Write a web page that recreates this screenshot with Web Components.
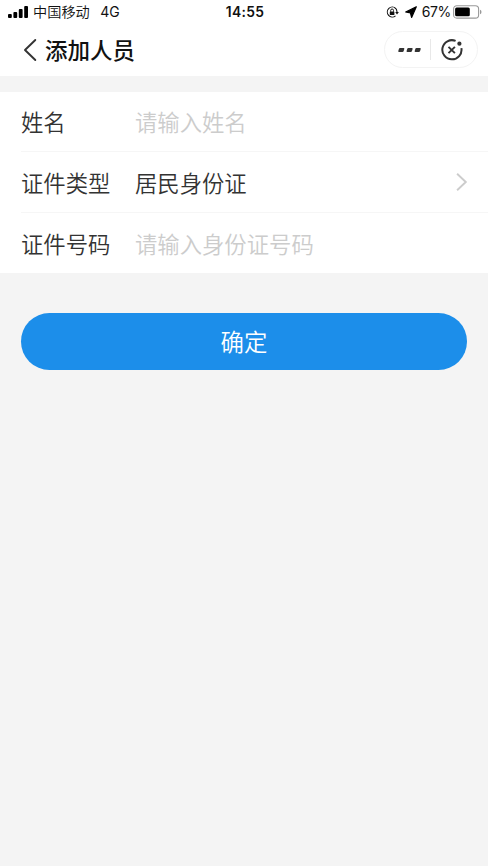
<!DOCTYPE html>
<html lang="zh-CN">
<head>
<meta charset="utf-8">
<title>添加人员</title>
<style>
html, body { margin: 0; height: 100%; background: #f4f4f4; }
body { font-family: "Inter", "Noto Sans CJK SC", sans-serif; color: #333; overflow: hidden; }
</style>
</head>
<body>
<person-page></person-page>
<script>
function define(name, html) {
  const t = document.createElement('template');
  t.innerHTML = html;
  customElements.define(name, class extends HTMLElement {
    constructor() {
      super();
      this.attachShadow({ mode: 'open' }).append(t.content.cloneNode(true));
    }
  });
}

define('status-bar', `
<style>
:host { display: grid; grid-template-columns: 1fr auto 1fr; align-items: center; height: 24px; box-sizing: border-box; padding: 0 6px 0 8px; background: #fff; color: #111; font-size: 14px; line-height: 24px; white-space: nowrap; }
.left, .right { display: flex; align-items: center; height: 24px; }
.right { justify-content: flex-end; }
.carrier { font: 350 14.2px/22px "Noto Sans CJK SC", sans-serif; height: 24px; margin-left: 5px; }
.net { margin-left: 10.5px; }
.time { font-weight: 600; font-size: 13.8px; letter-spacing: .35px; }
svg { display: block; flex: none; }
.lock { margin-right: 6px; }
.arrow { margin-right: 5px; }
.pct { letter-spacing: -.35px; margin-right: 2px; }
.arrow, .lock, .battery { margin-top: -1px; }
.signal { margin-top: -1px; }
</style>
<div class="left">
  <svg class="signal" width="20" height="12" viewBox="0 0 20 12"><g fill="#000"><rect y="8" width="3.8" height="4" rx="1"/><rect x="5.4" y="6" width="3.8" height="6" rx="1"/><rect x="10.8" y="3" width="3.8" height="9" rx="1"/><rect x="16.2" y="0" width="3.8" height="12" rx="1"/></g></svg>
  <span class="carrier">中国移动</span><span class="net">4G</span>
</div>
<span class="time">14:55</span>
<div class="right">
  <svg class="lock" width="13" height="12" viewBox="0 0 13 12"><path d="M9.8 2.4A5 5 0 1 0 9.5 9.9M8.5 1.5A5 5 0 0 1 11 6" fill="none" stroke="#111" stroke-width="1.1"/><path d="M9.2 6h3.7L11 8.4z" fill="#111"/><rect x="3.8" y="5.4" width="4.6" height="3.5" rx=".5" fill="#111"/><path d="M4.7 5.7V4.4a1.4 1.4 0 0 1 2.8 0v1.3" fill="none" stroke="#111"/></svg>
  <svg class="arrow" width="12" height="12" viewBox="0 0 12 12"><path d="M11.3.8.7 6 5.4 6.8 6.6 11.4z" fill="#000" stroke="#000" stroke-width="1.2" stroke-linejoin="round"/></svg>
  <span class="pct">67%</span>
  <svg class="battery" width="29" height="14" viewBox="0 0 29 14"><rect x=".6" y=".7" width="25" height="12.4" rx="3.2" fill="none" stroke="#999" stroke-width="1.1"/><rect x="2.1" y="2.6" width="14.7" height="8.7" rx="1.5" fill="#000"/><path d="M27 4.8q1.5.5 1.5 2.2T27 9.2z" fill="#999"/></svg>
</div>`);

define('capsule-menu', `
<style>
:host { display: flex; align-items: center; box-sizing: border-box; width: 94px; height: 37px; border: 1px solid #f3f3f3; border-radius: 19px; background: #fff; }
.half { flex: 1; display: flex; justify-content: center; }
.sep { width: 1px; height: 21px; background: #e8e8e8; }
svg { display: block; }
.more { padding-left: 4px; }
.close { padding-right: 5px; }
</style>
<div class="half more"><svg width="23" height="6" viewBox="0 0 23 6"><g fill="#333"><path d="M2 1h3.6q1 0 .7 1l-.6 2q-.3 1-1.3 1H1Q0 5 .3 4l.6-2Q1.2 1 2 1z"/><path transform="translate(8.3)" d="M2 1h3.6q1 0 .7 1l-.6 2q-.3 1-1.3 1H1Q0 5 .3 4l.6-2Q1.2 1 2 1z"/><path transform="translate(16.4)" d="M2 1h3.6q1 0 .7 1l-.6 2q-.3 1-1.3 1H1Q0 5 .3 4l.6-2Q1.2 1 2 1z"/></g></svg></div>
<div class="sep"></div>
<div class="half close"><svg width="22" height="22" viewBox="0 0 22 22"><path d="M14.6 1.9A9.6 9.6 0 1 0 20.4 9.2" fill="none" stroke="#333" stroke-width="2"/><circle cx="18.4" cy="4.7" r="2.1" fill="#333"/><path d="m7.5 7.8 6.4 6.4m0-6.4-6.4 6.4" stroke="#333" stroke-width="1.9"/></svg></div>`);

define('nav-bar', `
<style>
:host { display: flex; align-items: center; height: 52px; box-sizing: border-box; padding: 0 10px 0 22px; background: #fff; color: #111; }
h1 { flex: 1; height: 52px; margin: 0 0 0 8px; font: 500 22.5px/50px "Noto Sans CJK SC", sans-serif; }
svg { display: block; margin-top: -1px; }
capsule-menu { margin-top: -1px; }
</style>
<svg width="15" height="24" viewBox="0 0 15 24"><path d="M13.3 2 3 12l10.3 10" fill="none" stroke="#333" stroke-width="1.9" stroke-linecap="round" stroke-linejoin="round"/></svg>
<h1><slot></slot></h1>
<capsule-menu></capsule-menu>`);

define('form-row', `
<style>
:host { display: flex; align-items: center; height: 61px; box-sizing: border-box; margin-left: 21px; padding-right: 20px; border-bottom: 1px solid #f6f6f6; font: 350 22.35px/60px "Noto Sans CJK SC", sans-serif; }
:host(:first-child) { height: 60px; line-height: 58px; }
:host(:last-child) { height: 60px; border-bottom: 0; }
.label, .value { height: 60px; }
.label { width: 114px; color: #333; }
.value { flex: 1; color: #333; }
:host([placeholder]) .value { color: #ccc; }
</style>
<span class="label"><slot name="label"></slot></span>
<span class="value"><slot></slot></span>
<slot name="end"></slot>`);

define('chevron-right', `
<style>:host { display: block; } svg { display: block; }</style>
<svg width="12" height="20" viewBox="0 0 12 20"><path d="m1.1 1.8 8.7 8.2-8.7 8.2" fill="none" stroke="#ccc" stroke-width="1.9"/></svg>`);

define('pill-button', `
<style>
:host { display: block; }
button { display: block; width: 100%; height: 57px; padding: 0; border: 0; border-radius: 29px; background: #1c8eea; color: #fff; font: 350 23.4px/57px "Noto Sans CJK SC", sans-serif; }
</style>
<button><slot></slot></button>`);

define('person-page', `
<style>
:host { display: block; }
.form { margin-top: 16px; background: #fff; }
pill-button { margin: 40px 21px 0; }
</style>
<status-bar></status-bar>
<nav-bar>添加人员</nav-bar>
<div class="form">
  <form-row placeholder><span slot="label">姓名</span>请输入姓名</form-row>
  <form-row><span slot="label">证件类型</span>居民身份证<chevron-right slot="end"></chevron-right></form-row>
  <form-row placeholder><span slot="label">证件号码</span>请输入身份证号码</form-row>
</div>
<pill-button>确定</pill-button>`);
</script>
</body>
</html>
